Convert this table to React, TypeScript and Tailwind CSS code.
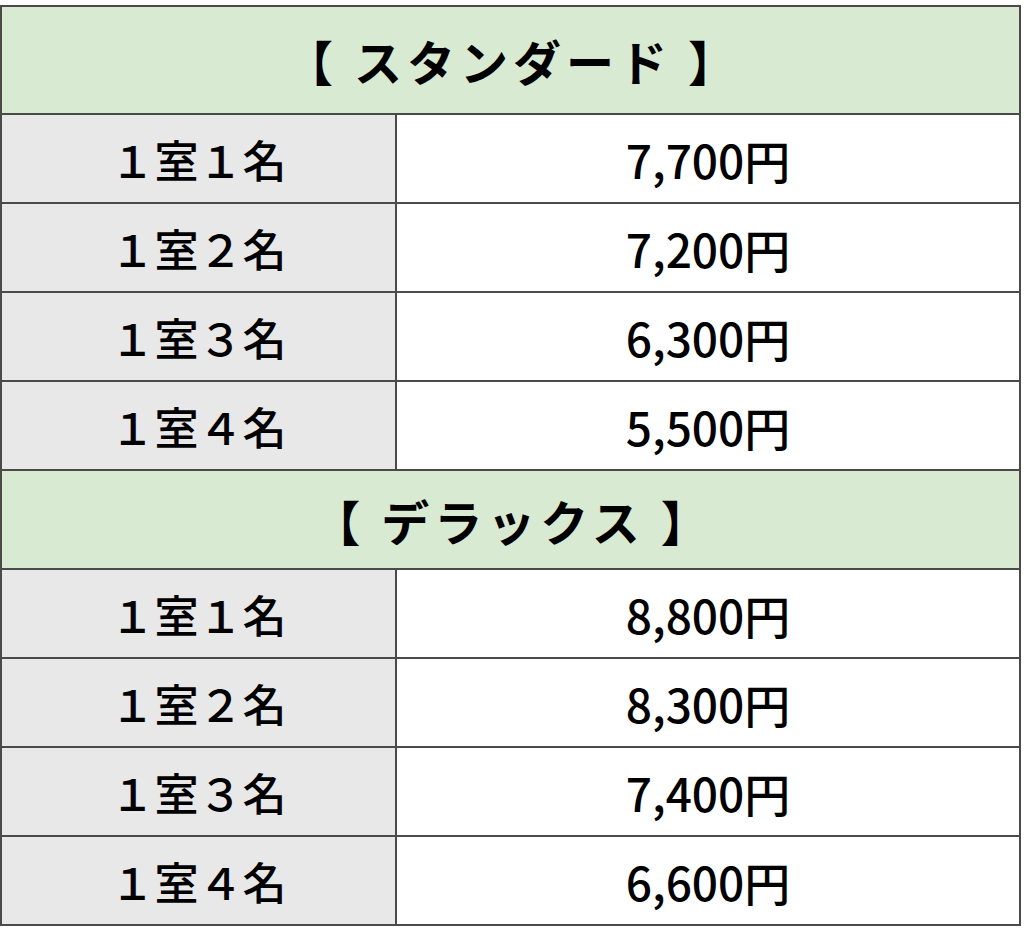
const sections = [
  {
    title: "【 スタンダード 】",
    height: "h-[108px]",
    rows: [
      { label: "１室１名", price: "7,700円" },
      { label: "１室２名", price: "7,200円" },
      { label: "１室３名", price: "6,300円" },
      { label: "１室４名", price: "5,500円" },
    ],
  },
  {
    title: "【 デラックス 】",
    height: "h-[99px]",
    rows: [
      { label: "１室１名", price: "8,800円" },
      { label: "１室２名", price: "8,300円" },
      { label: "１室３名", price: "7,400円" },
      { label: "１室４名", price: "6,600円" },
    ],
  },
]

export default function App() {
  return (
    <div
      className="w-[1024px] h-[930px] bg-white pt-[5px] text-black"
      style={{ fontFamily: '"Noto Sans CJK JP", "Noto Sans", sans-serif' }}
    >
      <table className="w-[1021px] border-collapse border-2 border-[#4a4a4a] table-fixed">
        <colgroup>
          <col className="w-[395px]" />
          <col />
        </colgroup>
        <tbody>
          {sections.map((section) => (
            <>
              <tr key={section.title} className={section.height}>
                <td
                  colSpan={2}
                  className="border-2 border-[#4a4a4a] bg-[#d9ead3] pl-[5px] text-center text-[48px] font-bold leading-none tracking-[5px]"
                >
                  {section.title}
                </td>
              </tr>
              {section.rows.map((row) => (
                <tr key={section.title + row.label} className="h-[89px]">
                  <td className="border-2 border-[#4a4a4a] bg-[#e8e8e8] text-center text-[44px] font-medium leading-none">
                    {row.label}
                  </td>
                  <td className="border-2 border-[#4a4a4a] bg-white text-center text-[46px] font-medium leading-none">
                    {row.price}
                  </td>
                </tr>
              ))}
            </>
          ))}
        </tbody>
      </table>
    </div>
  )
}
